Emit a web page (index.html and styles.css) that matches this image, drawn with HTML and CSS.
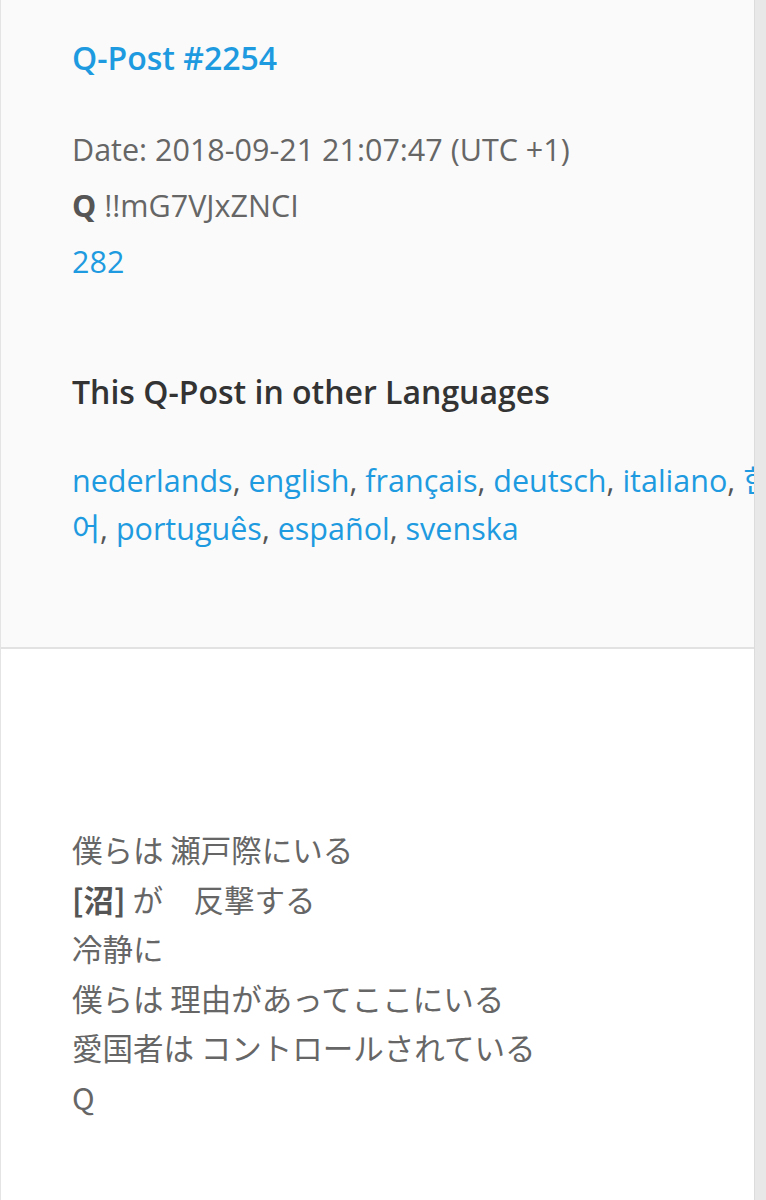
FILE: index.html
```html
<!DOCTYPE html>
<html lang="en">
<head>
  <meta charset="UTF-8" />
  <meta name="viewport" content="width=device-width, initial-scale=1.0"/>
  <title>Q-Post #2254</title>
  <link rel="stylesheet" href="styles.css">
</head>
<body>
  <div class="page">
    <div class="post-head">
      <h1 class="post-title"><a href="#">Q-Post #2254</a></h1>
      <p class="meta">Date: 2018-09-21 21:07:47 (UTC +1)</p>
      <p class="meta"><strong>Q</strong> !!mG7VJxZNCI</p>
      <p class="meta"><a href="#">282</a></p>

      <h2 class="lang-title">This Q-Post in other Languages</h2>
      <p class="langs">
        <a href="#">nederlands</a>, <a href="#">english</a>, <a href="#">français</a>, <a href="#">deutsch</a>, <a href="#">italiano</a>, <a href="#">한국어</a>, <a href="#">português</a>, <a href="#">español</a>, <a href="#">svenska</a>
      </p>
    </div>

    <div class="post-body">
      <p class="post-text">
        僕らは 瀬戸際にいる<br>
        <strong>[沼]</strong> が　反撃する<br>
        冷静に<br>
        僕らは 理由があってここにいる<br>
        愛国者は コントロールされている<br>
        Q
      </p>
    </div>
  </div>
</body>
</html>
```

FILE: styles.css
```css
body {
  margin: 0;
  background: #e8e8e8;
  font-family: "Open Sans", "Noto Sans CJK JP", sans-serif;
  color: #666;
}

a {
  color: #1e9be0;
  text-decoration: none;
}

.page {
  width: 755px;
  min-height: 1200px;
  background: #fff;
  border-left: 1px solid #e4e4e4;
  border-right: 1px solid #dcdcdc;
  box-sizing: border-box;
  overflow: hidden;
}

.post-head {
  background: #fafafa;
  border-bottom: 2px solid #e2e2e2;
  padding: 38px 0 0 71px;
  height: 649px;
  box-sizing: border-box;
}

.post-title {
  margin: 0 0 43px;
  font-size: 32px;
  font-weight: 600;
  line-height: 40px;
}

.meta {
  margin: 0;
  font-size: 30.5px;
  line-height: 56px;
}

.meta strong {
  color: #555;
}

.lang-title {
  margin: 83px 0 44px;
  font-size: 32px;
  font-weight: 600;
  line-height: 40px;
  color: #333;
}

.langs {
  width: 745px;
  margin: 0;
  font-size: 30.5px;
  line-height: 48px;
  color: #555;
}

.post-body {
  padding: 176px 0 0 71px;
}

.post-text {
  margin: 0;
  font-size: 30.5px;
  line-height: 49.5px;
  font-family: "Noto Sans CJK JP", sans-serif;
}

.post-text strong {
  color: #555;
}
```
